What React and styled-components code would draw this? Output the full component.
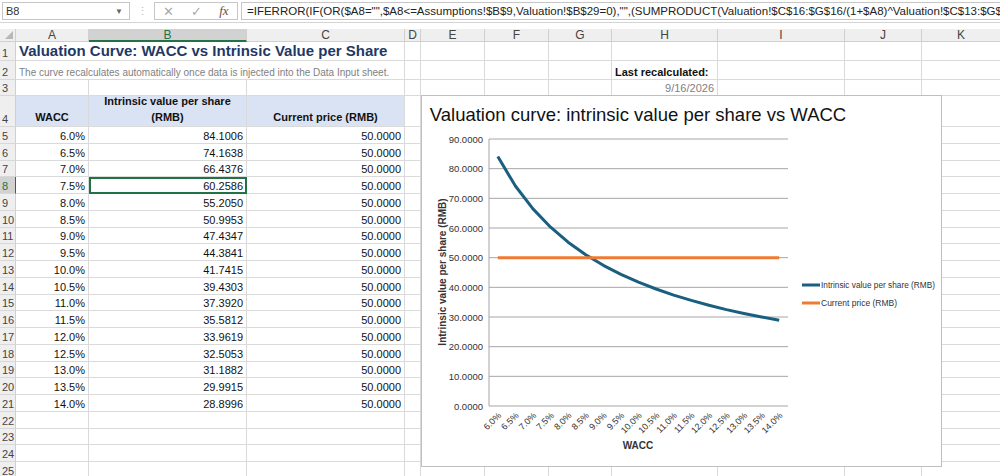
import React from "react";
import styled, { createGlobalStyle } from "styled-components";

const Global = createGlobalStyle`
  body { margin: 0; font-family: "Liberation Sans", Arial, sans-serif; background: #fff; overflow: hidden; }
`;

const COLS = [
  ["A", 73], ["B", 158], ["C", 158], ["D", 16], ["E", 64], ["F", 64], ["G", 63],
  ["H", 106], ["I", 127], ["J", 77], ["K", 79],
];
const ROWH = { 1: 19, 2: 19, 3: 16, 4: 31 };
const rowH = (r) => ROWH[r] || 16.75;

const DATA = [
  ["6.0%", "84.1006"], ["6.5%", "74.1638"], ["7.0%", "66.4376"], ["7.5%", "60.2586"],
  ["8.0%", "55.2050"], ["8.5%", "50.9953"], ["9.0%", "47.4347"], ["9.5%", "44.3841"],
  ["10.0%", "41.7415"], ["10.5%", "39.4303"], ["11.0%", "37.3920"], ["11.5%", "35.5812"],
  ["12.0%", "33.9619"], ["12.5%", "32.5053"], ["13.0%", "31.1882"], ["13.5%", "29.9915"],
  ["14.0%", "28.8996"],
];

const Page = styled.div`
  width: 1000px; height: 476px; position: relative; overflow: hidden;
`;
const FormulaBar = styled.div`
  height: 22px; display: flex; align-items: center; border-bottom: 1px solid #d4d4d4;
  font-size: 11px; color: #222;
`;
const NameBox = styled.div`
  width: 128px; height: 18px; margin-left: 2px; border: 1px solid #c6c6c6; display: flex;
  align-items: center; justify-content: space-between; padding: 0 6px 0 3px; box-sizing: border-box;
  color: #333;
`;
const Dots = styled.div` width: 24px; text-align: center; color: #bbb; `;
const FxBox = styled.div`
  width: 84px; height: 18px; border: 1px solid #c6c6c6; display: flex; align-items: center;
  justify-content: space-around; color: #aaa; font-size: 13px; box-sizing: border-box;
`;
const Fx = styled.span` font-family: "Liberation Serif", serif; font-style: italic; color: #555; `;
const Formula = styled.div`
  flex: 1; height: 18px; margin-left: 3px; border: 1px solid #c6c6c6; border-right: none; padding-left: 5px;
  box-sizing: border-box; white-space: nowrap; overflow: hidden; line-height: 16px; font-size: 11.5px;
`;
const Gap = styled.div` height: 6px; `;
const Row = styled.div` display: flex; height: ${(p) => p.h}px; `;
const RowHead = styled.div`
  width: 16px; flex: none; background: ${(p) => (p.sel ? "#d2d2d2" : "#efefef")};
  border-right: 1px solid ${(p) => (p.sel ? "#217346" : "#d0d0d0")};
  border-bottom: 1px solid #d8d8d8; box-sizing: border-box; font-size: 11px; color: ${(p) => (p.sel ? "#217346" : "#444")};
  display: flex; align-items: flex-end; padding: 0 0 1px 2px;
`;
const ColHead = styled.div`
  width: ${(p) => p.w}px; flex: none; box-sizing: border-box; background: ${(p) => (p.sel ? "#d2d2d2" : "#efefef")};
  border-right: 1px solid #d0d0d0; border-bottom: ${(p) => (p.sel ? "2px solid #217346" : "1px solid #d0d0d0")};
  text-align: center; font-size: 12px; color: ${(p) => (p.sel ? "#217346" : "#444")}; line-height: 12px;
`;
const Corner = styled.div`
  width: 16px; flex: none; background: #efefef; border-right: 1px solid #d0d0d0; border-bottom: 1px solid #d0d0d0;
  box-sizing: border-box; position: relative;
  &::after { content: ""; position: absolute; right: 2px; bottom: 2px; border: 4px solid transparent;
    border-right-color: #b8b8b8; border-bottom-color: #b8b8b8; }
`;
const Cell = styled.div`
  width: ${(p) => p.w}px; flex: none; box-sizing: border-box; border-right: 1px solid #dadada;
  border-bottom: 1px solid #dadada; font-size: 11px; color: #111; display: flex; align-items: flex-end;
  justify-content: ${(p) => p.align || "flex-end"}; padding: 0 3px 1px; white-space: nowrap; overflow: visible;
  background: ${(p) => (p.head ? "#dae3f3" : "transparent")}; font-weight: ${(p) => (p.bold ? 700 : 400)};
  ${(p) => p.sel && "outline: 2px solid #217346; outline-offset: -2px; position: relative; z-index: 1;"}
`;
const Title = styled.span` font-size: 15px; font-weight: 700; color: #1f3864; `;
const Sub = styled.span` font-size: 10px; color: #7f7f7f; `;
const HeadText = styled.span` text-align: center; width: 100%; line-height: 16px; `;

const Chart = styled.div`
  position: absolute; left: 421px; top: 95px; width: 521px; height: 372px; background: #fff;
  border: 1px solid #bfbfbf; box-sizing: border-box; z-index: 2;
`;

function ChartSvg() {
  const x0 = 67, x1 = 366, yTop = 43, yBot = 310;
  const n = DATA.length;
  const step = (x1 - x0) / n;
  const xs = DATA.map((_, i) => x0 + step * (i + 0.5));
  const y = (v) => yBot - (v / 90) * (yBot - yTop);
  const blue = DATA.map((d, i) => `${i ? "L" : "M"}${xs[i].toFixed(1)},${y(+d[1]).toFixed(1)}`).join(" ");
  const grid = [0, 10, 20, 30, 40, 50, 60, 70, 80, 90];
  return (
    <svg width="519" height="370" style={{ display: "block", fontFamily: "Liberation Sans, Arial, sans-serif" }}>
      <text x="216" y="25" fontSize="18.5" textAnchor="middle" fill="#111">Valuation curve: intrinsic value per share vs WACC</text>
      {grid.map((g) => (
        <g key={g}>
          <line x1={x0} x2={x1} y1={y(g)} y2={y(g)} stroke="#a6a6a6" strokeWidth="1" />
          <text x={x0 - 6} y={y(g) + 3.5} fontSize="9.5" textAnchor="end" fill="#333">{g.toFixed(4)}</text>
        </g>
      ))}
      <line x1={x0} x2={x0} y1={yTop} y2={yBot} stroke="#a6a6a6" />
      {DATA.map((d, i) => (
        <text key={i} x={xs[i] + 4} y={yBot + 10} fontSize="9" textAnchor="end" fill="#333"
          transform={`rotate(-45 ${xs[i] + 4} ${yBot + 10})`}>{d[0]}</text>
      ))}
      <path d={blue} fill="none" stroke="#1b5f80" strokeWidth="3" strokeLinejoin="round" />
      <line x1={xs[0]} x2={xs[n - 1]} y1={y(50)} y2={y(50)} stroke="#ef7b33" strokeWidth="3" />
      <text x="216" y="353" fontSize="10" fontWeight="700" textAnchor="middle" fill="#333">WACC</text>
      <text x="0" y="0" fontSize="10" fontWeight="700" textAnchor="middle" fill="#333"
        transform="translate(24 176) rotate(-90)">Intrinsic value per share (RMB)</text>
      <line x1="380" x2="398" y1="189" y2="189" stroke="#1b5f80" strokeWidth="3" />
      <text x="399" y="192" fontSize="8.5" fill="#333" textLength="114" lengthAdjust="spacingAndGlyphs">Intrinsic value per share (RMB)</text>
      <line x1="380" x2="398" y1="207" y2="207" stroke="#ef7b33" strokeWidth="3" />
      <text x="399" y="210" fontSize="8.5" fill="#333">Current price (RMB)</text>
    </svg>
  );
}

function content(r, c) {
  if (r === 1 && c === "A") return { node: <Title>Valuation Curve: WACC vs Intrinsic Value per Share</Title>, align: "flex-start", span: 3 };
  if (r === 2 && c === "A") return { node: <Sub>The curve recalculates automatically once data is injected into the Data Input sheet.</Sub>, align: "flex-start", span: 3 };
  if (r === 2 && c === "H") return { node: <b>Last recalculated:</b>, align: "flex-start" };
  if (r === 3 && c === "H") return { node: <span style={{ color: "#808080" }}>9/16/2026</span> };
  if (r === 4) {
    if (c === "A") return { node: <HeadText>WACC</HeadText>, head: true, bold: true };
    if (c === "B") return { node: <HeadText>Intrinsic value per share<br />(RMB)</HeadText>, head: true, bold: true };
    if (c === "C") return { node: <HeadText>Current price (RMB)</HeadText>, head: true, bold: true };
  }
  if (r >= 5 && r <= 21) {
    const d = DATA[r - 5];
    if (c === "A") return { node: d[0] };
    if (c === "B") return { node: d[1], sel: r === 8 };
    if (c === "C") return { node: "50.0000" };
  }
  return { node: null };
}

export default function App() {
  const rows = Array.from({ length: 25 }, (_, i) => i + 1);
  return (
    <Page>
      <Global />
      <FormulaBar>
        <NameBox><span>B8</span><span style={{ fontSize: 8, color: "#666" }}>▼</span></NameBox>
        <Dots>⋮</Dots>
        <FxBox><span>✕</span><span>✓</span><Fx>fx</Fx></FxBox>
        <Formula>=IFERROR(IF(OR($A8="",$A8&lt;=Assumptions!$B$9,Valuation!$B$29=0),"",(SUMPRODUCT(Valuation!$C$16:$G$16/(1+$A8)^Valuation!$C$13:$G$13)+IF($A8&lt;=Assumptions!$B$9,0,Valuation!$G$17/($A8-Assumptions!$B$9)))</Formula>
      </FormulaBar>
      <Gap />
      <Row h={13}>
        <Corner />
        {COLS.map(([c, w]) => <ColHead key={c} w={w} sel={c === "B"}>{c}</ColHead>)}
      </Row>
      {rows.map((r) => {
        const cells = [];
        for (let i = 0; i < COLS.length; i++) {
          const [c, w] = COLS[i];
          const x = content(r, c);
          let width = w;
          if (x.span) {
            for (let k = 1; k < x.span; k++) width += COLS[i + k][1];
            i += x.span - 1;
          }
          cells.push(
            <Cell key={c} w={width} align={x.align} head={x.head} bold={x.bold} sel={x.sel}>{x.node}</Cell>
          );
        }
        return (
          <Row key={r} h={rowH(r)}>
            <RowHead sel={r === 8}>{r}</RowHead>
            {cells}
          </Row>
        );
      })}
      <Chart><ChartSvg /></Chart>
    </Page>
  );
}
